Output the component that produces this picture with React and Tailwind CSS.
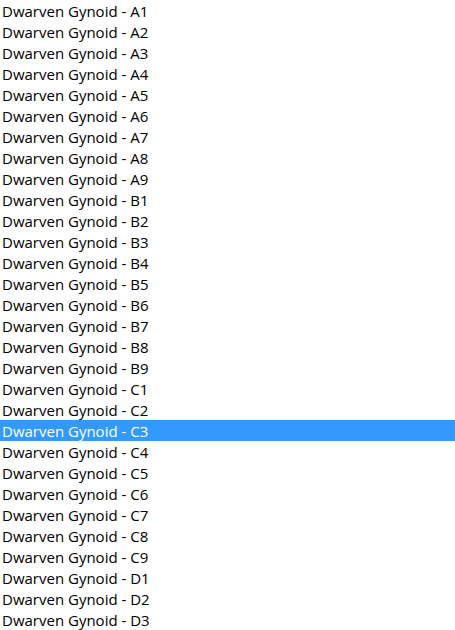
import React from 'react';

const groups = ['A', 'B', 'C', 'D'];
const items = [];
groups.forEach((g) => {
    for (let i = 1; i <= 9; i++) items.push(`Dwarven Gynoid - ${g}${i}`);
});

export default function App() {
    const selected = 'Dwarven Gynoid - C3';
    // only the rows that fit in the visible list area
    const visible = items.slice(0, 30);

    return (
        <div className="w-[455px] h-[630px] overflow-hidden bg-white">
            <ul className="font-['Open_Sans',sans-serif] text-[15px]">
                {visible.map((name) => (
                    <li
                        key={name}
                        className={
                            name === selected
                                ? 'h-[21px] leading-[22px] pl-[2px] bg-[#3399ff] text-white whitespace-nowrap'
                                : 'h-[21px] leading-[22px] pl-[2px] text-black whitespace-nowrap'
                        }
                    >
                        {name}
                    </li>
                ))}
            </ul>
        </div>
    );
}
